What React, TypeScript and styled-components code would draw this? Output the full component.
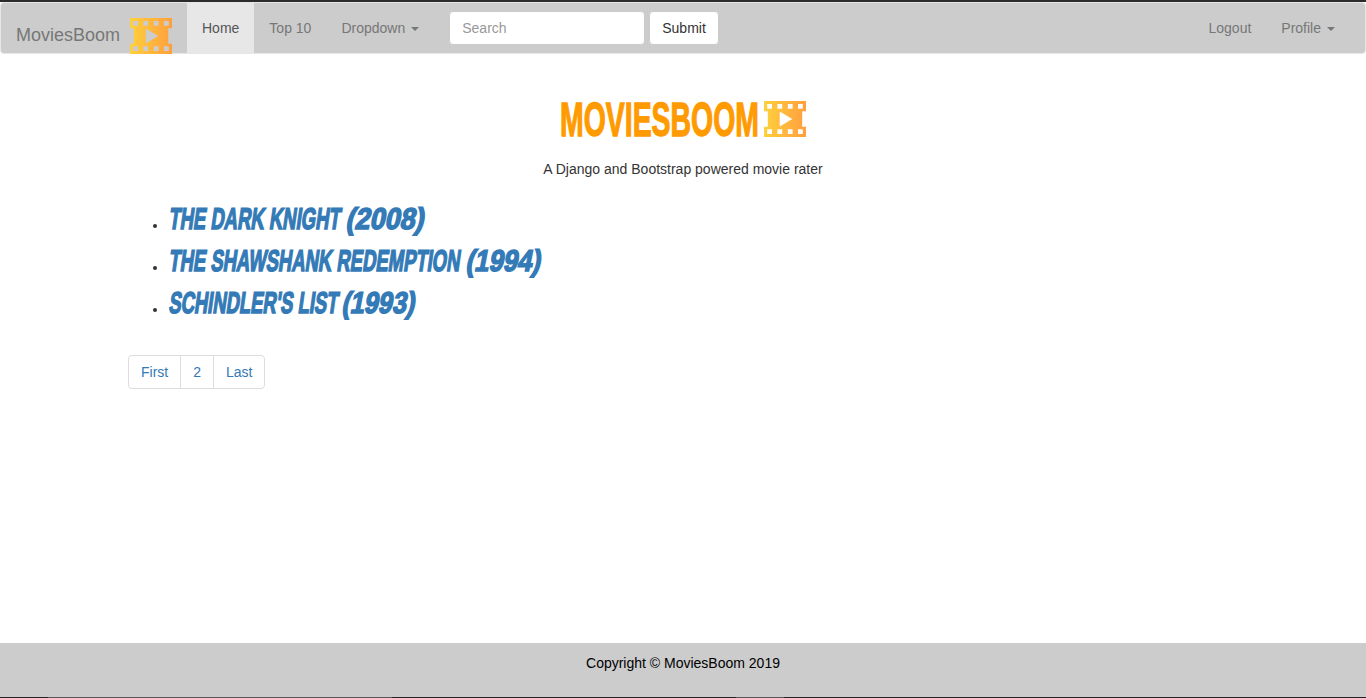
import React from "react";
import styled, { createGlobalStyle } from "styled-components";

const Global = createGlobalStyle`
  *, *::before, *::after { box-sizing: border-box; }
  body {
    margin: 0;
    background: #fff;
    color: #333;
    font: 14px/20px "Liberation Sans", Arial, sans-serif;
    overflow: hidden;
  }
  a { text-decoration: none; }
`;

const Page = styled.div`
  display: flex;
  flex-direction: column;
  height: 698px;
  border-top: 2px solid #2b2b2b;
`;

const Navbar = styled.nav`
  display: flex;
  height: 52px;
  flex: none;
  background: #ccc;
  border: 1px solid #e7e7e7;
  border-radius: 4px;
`;

const Brand = styled.a`
  display: flex;
  align-items: flex-start;
  gap: 10px;
  width: 186px;
  height: 51px;
  padding: 15px 0 0 15px;
  color: #777;
  font-size: 18px;

  span { padding-top: 7px; }
`;

const NavItem = styled.a<{ $active?: boolean }>`
  display: flex;
  align-items: center;
  height: 50px;
  padding: 0 15px;
  color: ${(p) => (p.$active ? "#555" : "#777")};
  background: ${(p) => (p.$active ? "#e7e7e7" : "transparent")};
`;

const Caret = styled.span`
  margin-left: 6px;
  margin-top: 2px;
  border-top: 4px solid;
  border-left: 4px solid transparent;
  border-right: 4px solid transparent;
`;

const SearchForm = styled.form`
  display: flex;
  gap: 4px;
  padding: 8px 15px;
`;

const SearchInput = styled.input`
  width: 196px;
  height: 34px;
  padding: 6px 12px;
  font: inherit;
  background: #fff;
  border: 1px solid #ccc;
  border-radius: 4px;
  &::placeholder { color: #999; opacity: 1; }
`;

const SubmitButton = styled.button`
  height: 34px;
  padding: 6px 12px;
  font: inherit;
  color: #333;
  background: #fff;
  border: 1px solid #ccc;
  border-radius: 4px;
`;

const RightNav = styled.div`
  display: flex;
  margin-left: auto;
  padding-right: 15px;
`;

const Main = styled.main`
  flex: 1;
  padding: 47px 128px 0;
`;

const Hero = styled.header`
  display: flex;
  flex-direction: column;
  align-items: center;
`;

const LogoRow = styled.div`
  display: flex;
  gap: 5px;
  margin-left: 1px;
`;

const Tagline = styled.p`
  margin: 22px 0 18px;
`;

const MovieList = styled.ul`
  margin: 0 0 32px;
  padding: 0 0 0 40px;
`;

const MovieItem = styled.li`
  height: 42px;
  padding-top: 12px;
`;

const MovieLink = styled.a`
  color: #337ab7;
  font: bold 30px/22px "Liberation Sans Narrow", "Liberation Sans", sans-serif;
  -webkit-text-stroke: 1.5px #337ab7;
  white-space: nowrap;
`;

const LinkPart = styled.span<{ $stretch: number; $width?: number }>`
  display: inline-block;
  width: ${(p) => (p.$width ? `${p.$width}px` : "auto")};
  transform-origin: 0 100%;
  transform: translateY(-1px) scaleX(${(p) => p.$stretch}) skewX(-13deg);
`;

const Pagination = styled.div`
  display: inline-flex;
  border: 1px solid #ddd;
  border-radius: 4px;
`;

const PageLink = styled.a`
  padding: 6px 12px;
  color: #337ab7;
  & + & { border-left: 1px solid #ddd; }
`;

const Footer = styled.footer`
  flex: none;
  height: 54px;
  padding-top: 10px;
  background: #ccc;
  color: #000;
  text-align: center;
`;

const BottomEdge = styled.div`
  flex: none;
  height: 1px;
  background: linear-gradient(to right, #222 48px, #555 48px 392px, #222 392px 736px, #555 736px 784px, #222 784px);
`;

const FilmSvg = styled.svg`
  flex: none;
`;

function FilmIcon({ id }: { id: string }) {
  return (
    <FilmSvg width="42" height="36" viewBox="0 0 42 36">
      <defs>
        <linearGradient id={id}>
          <stop offset="0" stopColor="#ffd03c" />
          <stop offset="1" stopColor="#ff9f3e" />
        </linearGradient>
      </defs>
      <path
        fill={`url(#${id})`}
        fillRule="evenodd"
        d="M0 0H42V10.3H38.2V25.7H42V36H0V25.7H3.8V10.3H0Z
          M3.2 2.9V7.8H8V2.9Z M13.4 2.9V7.8H18.2V2.9Z M23.8 2.9V7.8H28.6V2.9Z M34 2.9V7.8H38.8V2.9Z
          M3.2 28.2V33.1H8V28.2Z M13.4 28.2V33.1H18.2V28.2Z M23.8 28.2V33.1H28.6V28.2Z M34 28.2V33.1H38.8V28.2Z
          M15.7 10.4L28.3 18L15.7 25.6Z"
      />
    </FilmSvg>
  );
}

function Wordmark() {
  return (
    <svg width="198" height="36" viewBox="0 0 198 36" overflow="visible">
      <text
        x="-1"
        y="35"
        textLength="199"
        lengthAdjust="spacingAndGlyphs"
        fontFamily="'Liberation Sans Narrow', 'Liberation Sans', sans-serif"
        fontWeight="bold"
        fontSize="49"
        fill="#ff9a00"
        stroke="#ff9a00"
        strokeWidth="1.3"
      >
        MOVIESBOOM
      </text>
    </svg>
  );
}

const movies = [
  { title: "THE DARK KNIGHT", year: "(2008)", titleStretch: 0.616, yearStretch: 0.9, width: 177 },
  { title: "THE SHAWSHANK REDEMPTION", year: "(1994)", titleStretch: 0.615, yearStretch: 0.86, width: 297 },
  { title: "SCHINDLER'S LIST", year: "(1993)", titleStretch: 0.614, yearStretch: 0.84, width: 173 },
];

export default function App() {
  return (
    <Page>
      <Global />
      <Navbar>
        <Brand>
          <span>MoviesBoom</span>
          <FilmIcon id="film-nav" />
        </Brand>
        <NavItem $active>Home</NavItem>
        <NavItem>Top 10</NavItem>
        <NavItem>Dropdown<Caret /></NavItem>
        <SearchForm>
          <SearchInput placeholder="Search" />
          <SubmitButton type="button">Submit</SubmitButton>
        </SearchForm>
        <RightNav>
          <NavItem>Logout</NavItem>
          <NavItem>Profile<Caret /></NavItem>
        </RightNav>
      </Navbar>
      <Main>
        <Hero>
          <LogoRow>
            <Wordmark />
            <FilmIcon id="film-hero" />
          </LogoRow>
          <Tagline>A Django and Bootstrap powered movie rater</Tagline>
        </Hero>
        <MovieList>
          {movies.map((m) => (
            <MovieItem key={m.title}>
              <MovieLink>
                <LinkPart $stretch={m.titleStretch} $width={m.width}>{m.title}</LinkPart>
                <LinkPart $stretch={m.yearStretch}>{m.year}</LinkPart>
              </MovieLink>
            </MovieItem>
          ))}
        </MovieList>
        <Pagination>
          <PageLink>First</PageLink>
          <PageLink>2</PageLink>
          <PageLink>Last</PageLink>
        </Pagination>
      </Main>
      <Footer>Copyright © MoviesBoom 2019</Footer>
      <BottomEdge />
    </Page>
  );
}
